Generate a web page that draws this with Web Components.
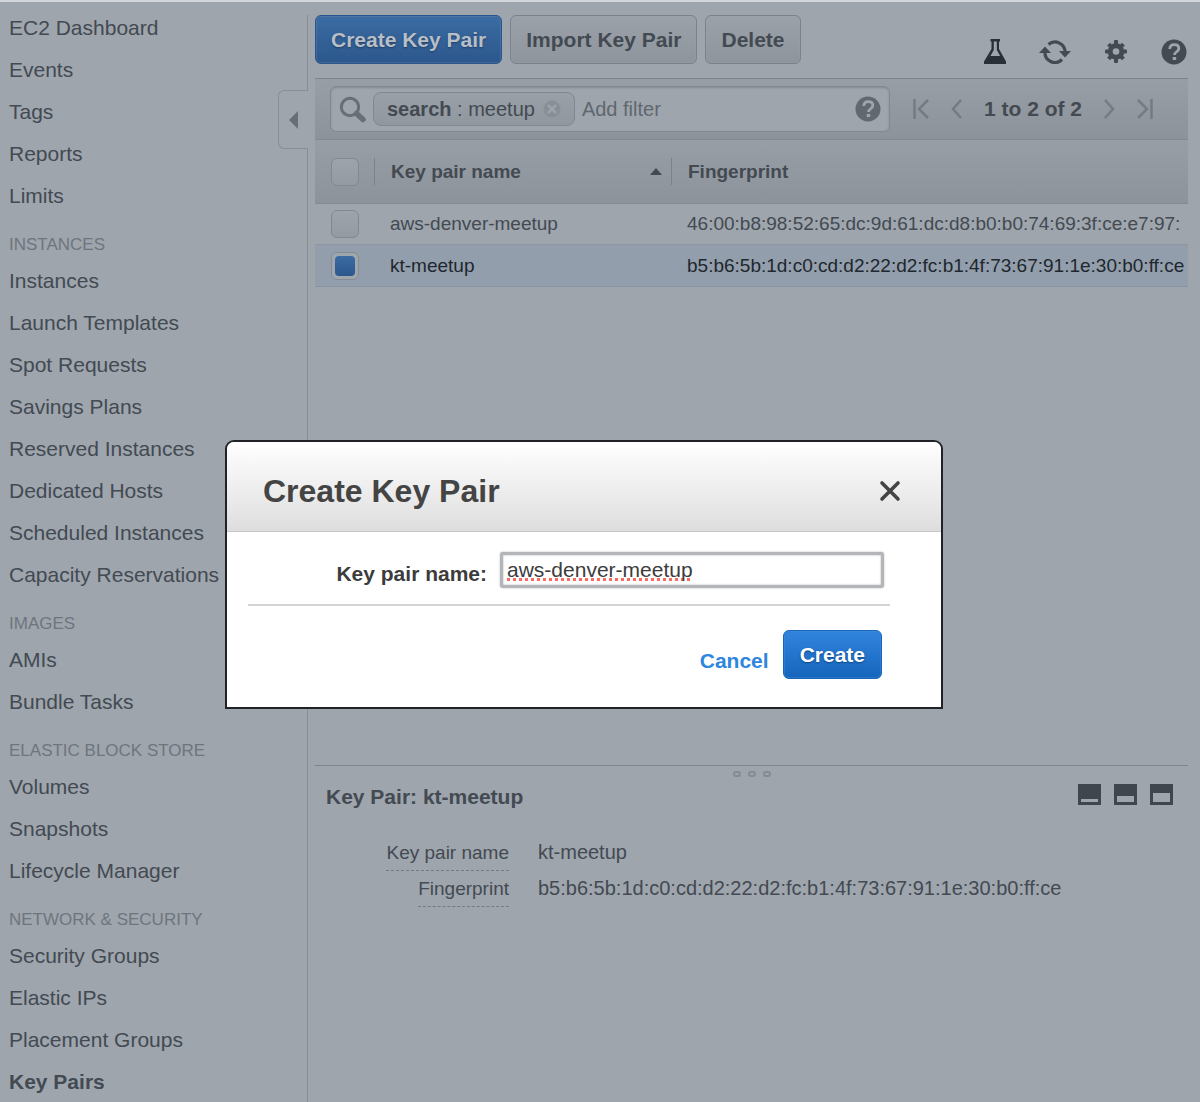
<!DOCTYPE html>
<html lang="en">
<head>
<meta charset="utf-8">
<title>EC2 Key Pairs</title>
<style>
:root{--bg:#9ea5ad;--ink:#434a52;--muted:#6f757d;--line:#888e96;--panel-top:#989ea6;--panel-end:#8c939a;--blue-top:#3a6ca3;--blue-end:#2c578c;}
*{box-sizing:border-box}
body{margin:0;background:var(--bg);color:var(--ink);font-family:"Liberation Sans",Arial,sans-serif;font-size:20px}
</style>
</head>
<body>
<ec2-console></ec2-console>
<script>
const base = `*{box-sizing:border-box}button,input{font:inherit;color:inherit;margin:0}button{cursor:pointer}svg{display:block}`;
function define(name, css, html, after) {
  customElements.define(name, class extends HTMLElement {
    constructor() {
      super();
      this.attachShadow({mode:'open'}).innerHTML = `<style>${base}${css}</style>${html}`;
    }
    connectedCallback() { if (after) after(this, this.shadowRoot); }
  });
}

define('nav-group', `
:host{display:block}
h2{margin:0;padding:13px 0 0;font-size:17px;font-weight:400;line-height:30px;color:var(--muted);text-transform:uppercase;white-space:nowrap}
h2:empty{display:none}
::slotted(a){display:block;color:var(--ink);text-decoration:none;font-size:21px;line-height:42px;white-space:nowrap}
::slotted(a[aria-current]){font-weight:700}`,
`<h2></h2><slot></slot>`,
(el, r) => { r.querySelector('h2').textContent = el.getAttribute('heading') || ''; });

define('side-nav', `
:host{display:flex;flex:none;width:308px}
nav{flex:1;padding:5px 0 0 9px;min-width:0}
.rail{display:flex;flex-direction:column;width:30px;padding-top:13px}
.line{border-right:1px solid var(--line)}
.top{height:75px}.rest{flex:1}
button{height:59px;width:30px;padding:0;display:flex;align-items:center;justify-content:center;background:none;border:1px solid var(--line);border-right:0;border-radius:6px 0 0 6px}`,
`<nav aria-label="EC2"><slot></slot></nav>
<div class="rail"><div class="line top"></div><button aria-label="Collapse navigation"><svg width="9" height="18" viewBox="0 0 9 18"><path d="M9 0v18L0 9z" fill="#686e76"/></svg></button><div class="line rest"></div></div>`);

define('action-button', `
:host{display:block}
button{height:49px;padding:0 15px;border:1px solid #7c828a;border-radius:6px;background:linear-gradient(#9ba1a9,#8e959c);font-size:21px;font-weight:700;white-space:nowrap;box-shadow:inset 0 0 0 1px #a0a6ae33;color:var(--ink)}
:host([kind=primary]) button{background:linear-gradient(var(--blue-top),var(--blue-end));border-color:#28558d;color:#b8bec6;text-shadow:0 1px 2px #1f3e66}
:host([kind=submit]) button{padding:0 16px;background:linear-gradient(#3184dc,#1665bd);border-color:#1764b8;color:#fff;text-shadow:0 1px 2px #0c4585;box-shadow:inset 0 0 0 1px #4a93e055}`,
`<button><slot></slot></button>`);

const icons = {
  flask:[22,25,`<path d="M6.500 0h9.500v2.500h-1V10l7 12.500V25H0v-2.500L7.500 10V2.500h-1z" fill="#282f37"/><path d="M9.800 2.500h3V11l3.400 6H6.400l3.400-6z" fill="#9ea5ad"/>`],
  refresh:[32,25,`<g fill="none" stroke="#434a52" stroke-width="3.200"><path d="M9.500 5.500A10 10 0 0 1 26 13.500"/><path d="M23 20.500A10 10 0 0 1 6 12.500"/></g><path d="M20 12h12l-6 6.500zM0 14h12L6 7.500z" fill="#434a52"/>`],
  gear:[24,24,`<g fill="#434a52"><circle cx="12" cy="11.500" r="8.300"/><rect x="10" width="4" height="23" rx="1"/><rect x="1" y="9.500" width="22" height="4" rx="1"/><path d="M10 1h4v21h-4zM1.500 9.500h21v4h-21z" transform="rotate(45 12 11.500)"/></g><circle cx="12" cy="11.500" r="3.300" fill="#9ea5ad"/>`],
  help:[26,26,`<circle cx="13" cy="13" r="12.500" fill="currentColor"/><path d="M8.700 10c.2-3 2-4.300 4.500-4.300 2.700 0 4.600 1.500 4.600 3.800 0 3.300-4.300 3.200-4.300 6.500" fill="none" stroke="#9ea5ad" stroke-width="2.800"/><path d="M11.700 18h3.500v3h-3.500z" fill="#9ea5ad"/>`],
  search:[27,27,`<circle cx="11" cy="11" r="8.700" fill="none" stroke="#686e76" stroke-width="3"/><path d="M17.500 17.500l6.500 6" stroke="#686e76" stroke-width="5.500" stroke-linecap="round"/>`],
  clear:[18,18,`<circle cx="9" cy="9" r="8.500" fill="#898f97"/><path d="M5 5l8 8M13 5l-8 8" stroke="#a0a6ae" stroke-width="2.200"/>`],
  first:[16,20,`<path d="M1.500 0v20M15 1L6 10l9 9" fill="none" stroke="#747b83" stroke-width="2.500"/>`],
  prev:[11,20,`<path d="M10 1L2 10l8 9" fill="none" stroke="#747b83" stroke-width="2.500"/>`],
  next:[11,20,`<path d="M1 1l8 9-8 9" fill="none" stroke="#747b83" stroke-width="2.500"/>`],
  last:[16,20,`<path d="M14.500 0v20M1 1l9 9-9 9" fill="none" stroke="#747b83" stroke-width="2.500"/>`],
  close:[22,22,`<path d="M3 3l16 16M19 3L3 19" stroke="#444" stroke-width="3.600" stroke-linecap="round"/>`],
  low:[23,21,`<path d="M0 0h23v21H0z" fill="#3f464e"/><path d="M3 15h17v3H3z" fill="#9ea5ad"/>`],
  mid:[23,21,`<path d="M0 0h23v21H0z" fill="#3f464e"/><path d="M3 12h17v6H3z" fill="#9ea5ad"/>`],
  high:[23,21,`<path d="M0 0h23v21H0z" fill="#3f464e"/><path d="M3 9h17v9H3z" fill="#9ea5ad"/>`]
};
define('icon-button', `
:host{display:block}
button{display:block;padding:0;border:0;background:none}`,
`<button></button>`,
(el, r) => {
  const [w, h, body] = icons[el.getAttribute('icon')];
  const b = r.querySelector('button');
  b.setAttribute('aria-label', el.getAttribute('label'));
  b.innerHTML = `<svg width="${w}" height="${h}" viewBox="0 0 ${w} ${h}">${body}</svg>`;
});

define('tool-bar', `
:host{display:flex;align-items:flex-start;gap:8px;padding:13px 1px 14px 0}
.icons{display:flex;align-items:center;gap:33px;margin-left:auto;padding-top:24px;height:49px}`,
`<action-button kind="primary">Create Key Pair</action-button><action-button>Import Key Pair</action-button><action-button>Delete</action-button>
<div class="icons"><icon-button icon="flask" label="Experiments"></icon-button><icon-button icon="refresh" label="Refresh"></icon-button><icon-button icon="gear" label="Settings"></icon-button><icon-button icon="help" label="Help"></icon-button></div>`);

define('filter-bar', `
:host{display:flex;align-items:center;height:62px;padding:0 35px 0 15px;border-top:1px solid #7d838b;border-bottom:1px solid #848a92;background:linear-gradient(var(--panel-top),var(--panel-end))}
.box{display:flex;align-items:center;flex:0 1 560px;height:46px;padding:0 8px;border:1px solid #82888f;border-radius:6px;background:var(--bg);box-shadow:inset 0 1px 2px #858b93}
.chip{display:flex;align-items:center;flex:none;height:34px;margin:0 7px;padding:0 13px;border:1px solid #82888f;border-radius:8px;background:linear-gradient(#9aa0a8,#90979e);white-space:pre}
.chip icon-button{margin-left:8px}
input{flex:1;min-width:0;padding:0;border:0;outline:0;background:none}
input::placeholder{color:#60676f;opacity:1}
.help{color:#62686f}
.pager{display:flex;align-items:center;gap:22px;margin-left:auto;font-size:21px;font-weight:700;white-space:nowrap}`,
`<div class="box"><icon-button icon="search" label="Search"></icon-button>
<span class="chip"><b>search</b> : meetup<icon-button icon="clear" label="Remove filter"></icon-button></span>
<input aria-label="Add filter" placeholder="Add filter"><icon-button class="help" icon="help" label="Filter help"></icon-button></div>
<div class="pager"><icon-button icon="first" label="First page"></icon-button><icon-button icon="prev" label="Previous page"></icon-button><span>1 to 2 of 2</span><icon-button icon="next" label="Next page"></icon-button><icon-button icon="last" label="Last page"></icon-button></div>`);

define('key-table', `
:host{display:block;flex:1;font-size:19px}
table{width:100%;table-layout:fixed;border-collapse:separate;border-spacing:0}
th,td{padding:0;text-align:left;white-space:nowrap;overflow:hidden}
.c{width:59px}.n{width:297px}
thead th{height:64px;background:linear-gradient(var(--panel-top),var(--panel-end));border-bottom:1px solid #848a92}
thead div{display:flex;align-items:center;height:27px}
thead .c div{padding-left:16px}
thead .n div,thead .f div{border-left:1px solid #7c828a;padding-left:16px}
.n div{justify-content:space-between;padding-right:9px}
td{height:41px;border-bottom:1px solid #8f969e}
td.c{padding-left:16px}td.n,td.f{padding-left:16px}
.sel td{color:#20272e;background:#929eab;height:42px;border-color:#8793a0}
input{appearance:none;display:block;width:28px;height:28px;border:1px solid #82888f;border-radius:6px;background:linear-gradient(#9ea4ac,#949aa2)}
input:checked{position:relative;background:#a0a6ae;border-color:#858c94}
input:checked::after{content:"";position:absolute;inset:3px;border-radius:4px;background:linear-gradient(var(--blue-top),var(--blue-end))}`,
`<table><thead><tr><th class="c"><div><input type="checkbox" aria-label="Select all"></div></th><th class="n"><div>Key pair name<svg width="12" height="7" viewBox="0 0 12 7"><path d="M0 7L6 0l6 7z" fill="#434a52"/></svg></div></th><th class="f"><div>Fingerprint</div></th></tr></thead>
<tbody><tr><td class="c"><input type="checkbox" aria-label="Select aws-denver-meetup"></td><td class="n">aws-denver-meetup</td><td class="f">46:00:b8:98:52:65:dc:9d:61:dc:d8:b0:b0:74:69:3f:ce:e7:97:</td></tr>
<tr class="sel"><td class="c"><input type="checkbox" checked aria-label="Select kt-meetup"></td><td class="n">kt-meetup</td><td class="f">b5:b6:5b:1d:c0:cd:d2:22:d2:fc:b1:4f:73:67:91:1e:30:b0:ff:ce</td></tr></tbody></table>`);

define('detail-pane', `
:host{display:block;flex:0 0 338px;border-top:1px solid #7f858d}
.grip{display:flex;justify-content:center;gap:7px;height:12px;padding-top:5px}
.grip i{width:8px;height:6px;border:2px solid #858b93;border-radius:3px}
header{display:flex;align-items:flex-start;justify-content:space-between;height:36px;padding:6px 15px 0 11px}
h2{margin:0;font-size:21px;line-height:26px;font-weight:700}
.sizes{display:flex;gap:13px}
dl{display:grid;grid-template-columns:194px 1fr;column-gap:29px;margin:22px 0 0}
dt,dd{margin:0;height:36px;white-space:nowrap}
dt{font-size:19px;text-align:right}
dt span{display:inline-block;line-height:34px;border-bottom:1px dashed #747b83}
dd{line-height:32px}`,
`<div class="grip"><i></i><i></i><i></i></div>
<header><h2>Key Pair: kt-meetup</h2><div class="sizes"><icon-button icon="low" label="Small pane"></icon-button><icon-button icon="mid" label="Medium pane"></icon-button><icon-button icon="high" label="Large pane"></icon-button></div></header>
<dl><dt><span>Key pair name</span></dt><dd>kt-meetup</dd><dt><span>Fingerprint</span></dt><dd>b5:b6:5b:1d:c0:cd:d2:22:d2:fc:b1:4f:73:67:91:1e:30:b0:ff:ce</dd></dl>`);

define('create-dialog', `
:host{display:block;position:absolute;left:225px;top:438px;width:718px;background:#fff;border:2px solid #202226;border-radius:9px 9px 0 0;color:#3c3c3c;font-size:21px}
header{display:flex;align-items:center;justify-content:space-between;height:90px;padding:8px 40px 0 36px;background:linear-gradient(#fff,#dedede);border-bottom:1px solid #c6c6c6;border-radius:7px 7px 0 0}
h1{margin:0;font-size:32px;line-height:40px;color:#444}
.field{display:flex;align-items:center;justify-content:flex-end;gap:13px;margin:0 51px 0 21px;padding:20px 6px 16px 0;border-bottom:2px solid #d4d4d4}
label{font-weight:700;padding-top:8px;white-space:nowrap}
input{width:384px;height:36px;padding:0 4px;border:3px solid #b3b5b8;outline:0;border-radius:3px;background:#fff;box-shadow:0 0 2px #b3b5b8,inset 0 0 2px #a9abad;text-decoration:underline dotted #ff685e 3px;text-underline-offset:1px;text-decoration-skip-ink:none}
footer{display:flex;align-items:center;justify-content:flex-end;gap:14px;padding:24px 59px 28px}
a{padding-top:13px;color:#2f86df;font-weight:700;text-decoration:none}`,
`<header><h1>Create Key Pair</h1><icon-button icon="close" label="Close"></icon-button></header>
<div class="field"><label for="name">Key pair name:</label><input id="name" value="aws-denver-meetup" spellcheck="false"></div>
<footer><a href="#">Cancel</a><action-button kind="submit">Create</action-button></footer>`,
el => { el.setAttribute('role','dialog'); el.setAttribute('aria-label','Create Key Pair'); });

const groups = [
  ['', 'EC2 Dashboard,Events,Tags,Reports,Limits'],
  ['Instances', 'Instances,Launch Templates,Spot Requests,Savings Plans,Reserved Instances,Dedicated Hosts,Scheduled Instances,Capacity Reservations'],
  ['Images', 'AMIs,Bundle Tasks'],
  ['Elastic Block Store', 'Volumes,Snapshots,Lifecycle Manager'],
  ['Network &amp; Security', 'Security Groups,Elastic IPs,Placement Groups,Key Pairs']
];
const nav = groups.map(([h, l]) => `<nav-group heading="${h}">${l.split(',').map(t => `<a href="#"${t === 'Key Pairs' ? ' aria-current="page"' : ''}>${t}</a>`).join('')}</nav-group>`).join('');
define('ec2-console', `
:host{display:flex;position:relative;min-height:100vh;border-top:2px solid #d3d6da}
main{display:flex;flex-direction:column;flex:1;min-width:0;margin:0 12px 0 7px}`,
`<side-nav>${nav}</side-nav><main><tool-bar></tool-bar><filter-bar></filter-bar><key-table></key-table><detail-pane></detail-pane></main><create-dialog></create-dialog>`);
</script>
</body>
</html>
